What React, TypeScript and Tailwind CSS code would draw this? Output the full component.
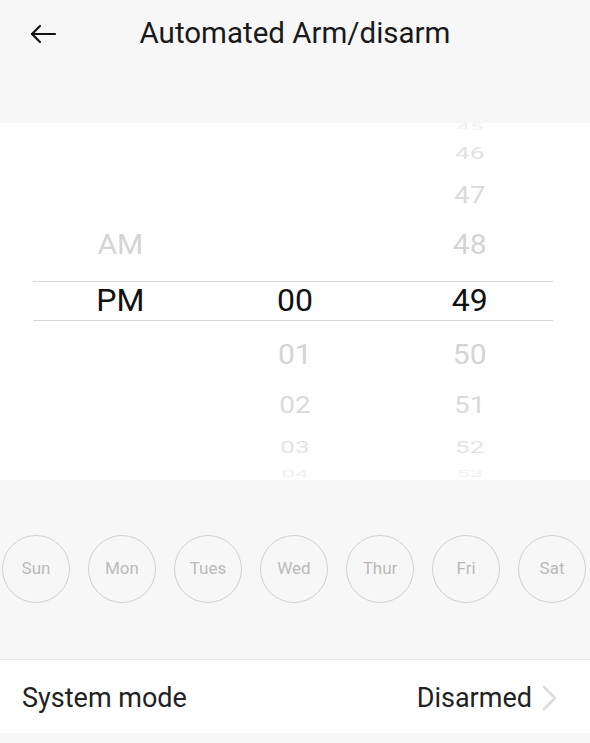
import React from 'react';

const font = { fontFamily: 'Roboto, "Noto Sans", sans-serif' };

// wheel rows: height of slot, font size, vertical squash, colour
const slots = [
  { h: 'h-[18px]', size: 'text-[24px]', squash: 'scale-y-[0.4]', color: 'text-[#f0f0f0]' },
  { h: 'h-[34px]', size: 'text-[26px]', squash: 'scale-y-[0.65]', color: 'text-[#e2e2e2]' },
  { h: 'h-[50px]', size: 'text-[28px]', squash: 'scale-y-[0.85]', color: 'text-[#dadada]' },
  { h: 'h-[50px]', size: 'text-[30px]', squash: 'scale-y-[0.93]', color: 'text-[#d4d4d4]' },
  { h: 'h-[60px]', size: 'text-[32px]', squash: 'scale-y-100', color: 'text-[#111111]' },
  { h: 'h-[50px]', size: 'text-[30px]', squash: 'scale-y-[0.93]', color: 'text-[#d4d4d4]' },
  { h: 'h-[50px]', size: 'text-[28px]', squash: 'scale-y-[0.85]', color: 'text-[#dadada]' },
  { h: 'h-[34px]', size: 'text-[26px]', squash: 'scale-y-[0.65]', color: 'text-[#e4e4e4]' },
  { h: 'h-[20px]', size: 'text-[24px]', squash: 'scale-y-[0.4]', color: 'text-[#f0f0f0]' },
];

const columns = [
  ['', '', '', 'AM', 'PM', '', '', '', ''],
  ['', '', '', '', '00', '01', '02', '03', '04'],
  ['45', '46', '47', '48', '49', '50', '51', '52', '53'],
];

const days = ['Sun', 'Mon', 'Tues', 'Wed', 'Thur', 'Fri', 'Sat'];

const Wheel = ({ values }: { values: string[] }) => (
  <div className="flex w-1/3 flex-col -mt-[5px]">
    {values.map((v, i) => (
      <div key={i} className={`flex items-center justify-center ${slots[i].h}`}>
        <span className={`leading-none ${slots[i].size} ${slots[i].squash} ${slots[i].color}`}>{v}</span>
      </div>
    ))}
  </div>
);

export default function App() {
  return (
    <div className="min-h-[743px] w-[590px] bg-[#f7f7f7]" style={font}>
      {/* header */}
      <div className="h-[123px]">
        <div className="grid h-[67px] grid-cols-[1fr_auto_1fr] items-center">
          <div className="pl-[30px]">
            <svg width="26" height="20" viewBox="0 0 26 20" fill="none" stroke="#111" strokeWidth="2.2" strokeLinecap="round" strokeLinejoin="round">
              <path d="M25 10H2" />
              <path d="M10 2L2 10L10 18" />
            </svg>
          </div>
          <h1 className="text-[29.5px] leading-none text-[#1a1a1a]">Automated Arm/disarm</h1>
          <div />
        </div>
      </div>

      {/* time picker */}
      <div className="relative h-[357px] overflow-hidden bg-white">
        <div className="flex px-[33px]">
          {columns.map((c, i) => (
            <Wheel key={i} values={c} />
          ))}
        </div>
        <div className="absolute left-[33px] right-[37px] top-[158px] h-px bg-[#d6d6d6]" />
        <div className="absolute left-[33px] right-[37px] top-[197px] h-px bg-[#d6d6d6]" />
      </div>

      {/* week days */}
      <div className="flex gap-[18px] px-[2px] pt-[55px] pb-[56px]">
        {days.map((d) => (
          <div
            key={d}
            className="flex h-[68px] w-[68px] items-center justify-center rounded-full border-[1.5px] border-[#d0d0d0] text-[17px] text-[#bababa]"
          >
            {d}
          </div>
        ))}
      </div>

      {/* system mode */}
      <div className="flex h-[74px] items-center justify-between border-t border-[#e6e6e6] bg-white pt-[3px] pl-[22px] pr-[33px]">
        <span className="text-[27px] text-[#222]">System mode</span>
        <div className="flex items-center gap-[10px]">
          <span className="text-[27px] text-[#222]">Disarmed</span>
          <svg width="15" height="26" viewBox="0 0 15 26" fill="none" stroke="#dcdcdc" strokeWidth="2.6" strokeLinecap="round" strokeLinejoin="round">
            <path d="M2 2L13 13L2 24" />
          </svg>
        </div>
      </div>
    </div>
  );
}
